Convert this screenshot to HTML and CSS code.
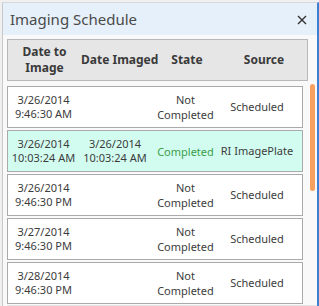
FILE: index.html
```html
<!DOCTYPE html>
<html lang="en">

<head>
    <meta charset="UTF-8">
    <meta name="viewport" content="width=device-width, initial-scale=1.0">
    <title>Imaging Schedule</title>
    <link rel="stylesheet" href="styles.css">
</head>

<body>
    <div class="dialog">
        <!-- 标题栏 -->
        <div class="title-bar">
            <span class="title">Imaging Schedule</span>
            <a href="javascript:;" class="close">
                <svg width="10" height="10" viewBox="0 0 10 10">
                    <path d="M1 1 L9 9 M9 1 L1 9" stroke="#333" stroke-width="1.4" fill="none"/>
                </svg>
            </a>
        </div>
        <div class="content">
            <!-- 表头 -->
            <div class="table-head">
                <div class="cell">Date to<br>Image</div>
                <div class="cell">Date Imaged</div>
                <div class="cell">State</div>
                <div class="cell">Source</div>
            </div>
            <!-- 列表 -->
            <div class="list">
                <ul class="rows">
                    <li class="row">
                        <div class="cell">3/26/2014<br>9:46:30 AM</div>
                        <div class="cell"></div>
                        <div class="cell state">Not<br>Completed</div>
                        <div class="cell">Scheduled</div>
                    </li>
                    <li class="row done">
                        <div class="cell">3/26/2014<br>10:03:24 AM</div>
                        <div class="cell">3/26/2014<br>10:03:24 AM</div>
                        <div class="cell state">Completed</div>
                        <div class="cell">RI ImagePlate</div>
                    </li>
                    <li class="row">
                        <div class="cell">3/26/2014<br>9:46:30 PM</div>
                        <div class="cell"></div>
                        <div class="cell state">Not<br>Completed</div>
                        <div class="cell">Scheduled</div>
                    </li>
                    <li class="row">
                        <div class="cell">3/27/2014<br>9:46:30 PM</div>
                        <div class="cell"></div>
                        <div class="cell state">Not<br>Completed</div>
                        <div class="cell">Scheduled</div>
                    </li>
                    <li class="row">
                        <div class="cell">3/28/2014<br>9:46:30 PM</div>
                        <div class="cell"></div>
                        <div class="cell state">Not<br>Completed</div>
                        <div class="cell">Scheduled</div>
                    </li>
                </ul>
                <!-- 滚动条 -->
                <div class="thumb"></div>
            </div>
        </div>
    </div>
</body>

</html>
```

FILE: styles.css
```css
* {
    box-sizing: border-box;
}

body {
    margin: 0;
    background: #f0f0f0;
    font-family: "Noto Sans", "Open Sans", sans-serif;
}

ul,
li {
    margin: 0;
    padding: 0;
    list-style: none;
}

.dialog {
    margin: 2px 0 0 2px;
    width: 317px;
    height: 304px;
    border-left: 1px solid #c8c8c8;
    border-top: 1px solid #d8d8d8;
    border-right: 2px solid #3c80d6;
    background: #f9f9f9;
    display: flex;
    flex-direction: column;
}

.title-bar {
    height: 32px;
    background: #e5f0fa;
    display: flex;
    align-items: center;
    justify-content: space-between;
    padding: 0 10px 0 7px;
}

.title {
    font-size: 15px;
    color: #4a4a4a;
}

.close {
    display: flex;
    margin-top: 1px;
}

.content {
    flex: 1;
    padding: 4px 0 0 4px;
    display: flex;
    flex-direction: column;
    min-height: 0;
}

.table-head {
    width: 301px;
    height: 42px;
    border: 1px solid #b8b8b8;
    background: #e6e6e6;
    display: grid;
    grid-template-columns: 73px 72px 68px 86px;
    align-items: center;
    font-size: 12px;
    font-weight: bold;
    color: #3a3a3a;
    line-height: 16px;
    white-space: nowrap;
}

.cell {
    text-align: center;
}

.list {
    position: relative;
    flex: 1;
    margin-top: 3px;
    overflow: hidden;
    border-bottom: 1px solid #e4e4e4;
}

.rows {
    padding-top: 2px;
}

.row {
    width: 296px;
    height: 42px;
    margin-bottom: 2px;
    border: 1px solid #aaa;
    background: #fff;
    display: grid;
    grid-template-columns: 71px 72px 69px 74px;
    align-items: center;
    font-size: 11px;
    line-height: 14px;
    color: #3c3c3c;
}

.row .state {
    line-height: 15px;
}

.row.done {
    background: #d3fcf1;
}

.row.done .state {
    color: #3a9e4a;
}

.thumb {
    position: absolute;
    left: 303px;
    top: 0;
    width: 5px;
    height: 107px;
    border-radius: 3px;
    background: #f8a060;
}
```
